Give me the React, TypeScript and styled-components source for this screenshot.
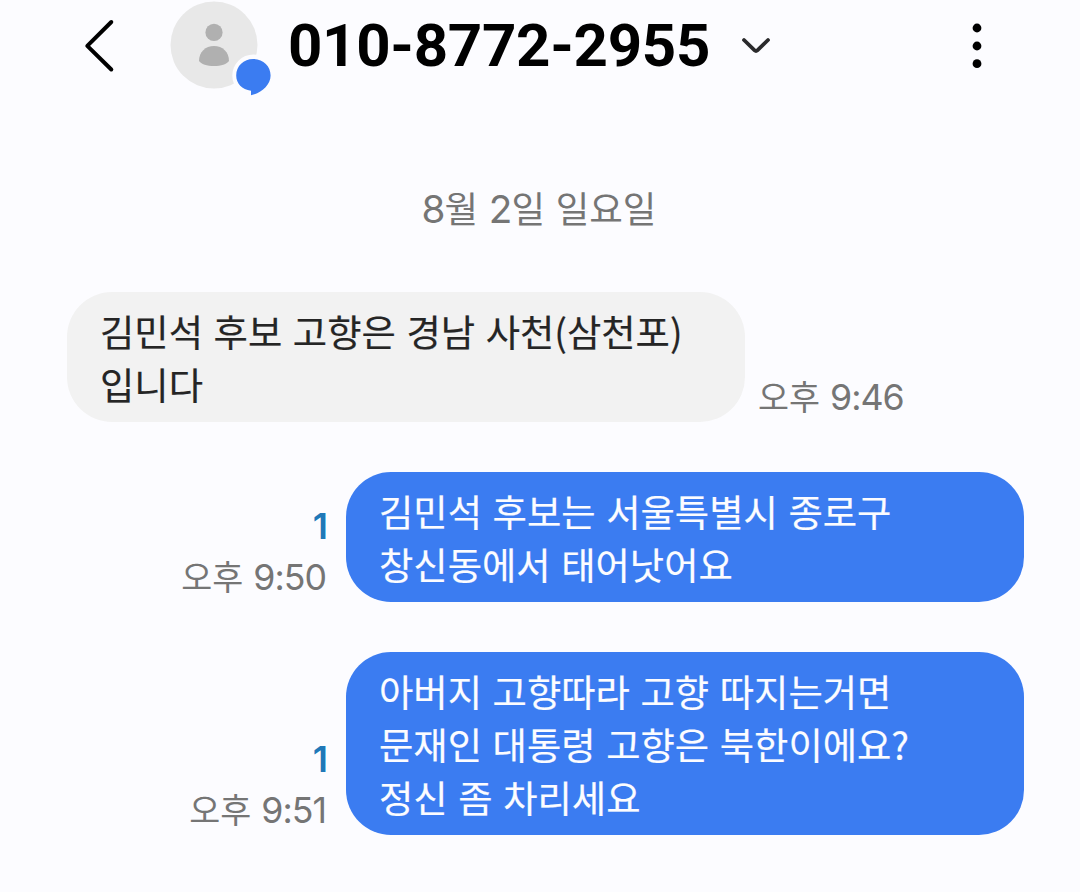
import React from "react";
import styled, { createGlobalStyle } from "styled-components";

type Message = {
  id: number;
  mine: boolean;
  lines: string[];
  time: string;
  unread?: number;
};

const messages: Message[] = [
  {
    id: 1,
    mine: false,
    lines: ["김민석 후보 고향은 경남 사천(삼천포)", "입니다"],
    time: "9:46",
  },
  {
    id: 2,
    mine: true,
    lines: ["김민석 후보는 서울특별시 종로구", "창신동에서 태어낫어요"],
    time: "9:50",
    unread: 1,
  },
  {
    id: 3,
    mine: true,
    lines: [
      "아버지 고향따라 고향 따지는거면",
      "문재인 대통령 고향은 북한이에요?",
      "정신 좀 차리세요",
    ],
    time: "9:51",
    unread: 1,
  },
];

const ContactAvatar = () => (
  <Avatar viewBox="0 0 104 100">
    <circle cx="44" cy="45" r="43.5" fill="#e8e8e8" />
    <circle cx="44" cy="32.4" r="8.6" fill="#b0b0b0" />
    <path
      d="M29 61C29 52 35.5 46 44 46S59 52 59 61C57 64 51 66 44 66S31 64 29 61Z"
      fill="#b0b0b0"
    />
    <circle cx="83.3" cy="75.5" r="21" fill="#fcfcff" />
    <path
      d="M83.3 59C93 59 100.6 66 100.6 75.5C100.6 85 91 93.5 81 95.2V90.8C72 89.5 66.2 83.5 66.2 75.5C66.2 66 73.7 59 83.3 59Z"
      fill="#3b7cf1"
    />
  </Avatar>
);

const MessageRow = ({ message }: { message: Message }) => (
  <Row $mine={message.mine}>
    <Bubble $mine={message.mine}>
      {message.lines.map((line) => (
        <Line key={line}>{line}</Line>
      ))}
    </Bubble>
    <Meta $mine={message.mine}>
      {message.unread ? <Unread>{message.unread}</Unread> : null}
      <Time>
        오후 <Digits>{message.time}</Digits>
      </Time>
    </Meta>
  </Row>
);

const App = () => (
  <>
    <GlobalStyle />
    <Screen>
      <Header>
        <BackIcon viewBox="0 0 32 56">
          <path d="M27.3 4L3.3 27.8L27.3 51.5" />
        </BackIcon>
        <ContactAvatar />
        <PhoneNumber>010-8772-2955</PhoneNumber>
        <ChevronIcon viewBox="0 0 32 20">
          <path d="M4 4L14.6 14.4Q16 15.6 17.4 14.4L28 4" />
        </ChevronIcon>
        <MoreIcon viewBox="0 0 12 48">
          <circle cx="6" cy="6" r="4.4" />
          <circle cx="6" cy="24" r="4.4" />
          <circle cx="6" cy="41.7" r="4.4" />
        </MoreIcon>
      </Header>
      <DateLabel>
        <Digits>8</Digits>월 <Digits>2</Digits>일 일요일
      </DateLabel>
      <MessageList>
        {messages.map((message) => (
          <MessageRow key={message.id} message={message} />
        ))}
      </MessageList>
    </Screen>
  </>
);

export default App;

const GlobalStyle = createGlobalStyle`
  * {
    box-sizing: border-box;
  }

  body {
    margin: 0;
    background: #fcfcff;
    font-family: "Noto Sans CJK KR", sans-serif;
  }
`;

const Screen = styled.div`
  width: 1080px;
  height: 892px;
  overflow: hidden;
  background: #fcfcff;
`;

const Header = styled.header`
  display: flex;
  align-items: center;
  height: 100px;
  padding: 0 97px 0 84px;

  svg {
    flex: none;
  }
`;

const BackIcon = styled.svg`
  width: 32px;
  height: 56px;
  margin-bottom: 8px;
  fill: none;
  stroke: #000;
  stroke-width: 4;
  stroke-linecap: round;
  stroke-linejoin: round;
`;

const Avatar = styled.svg`
  width: 104px;
  height: 100px;
  margin-left: 54px;
`;

const PhoneNumber = styled.h1`
  width: 423px;
  margin: 0 0 9px 14px;
  font-family: Roboto, sans-serif;
  font-size: 60px;
  font-weight: 700;
  line-height: 80px;
  letter-spacing: -0.3px;
  white-space: nowrap;
  color: #000;
`;

const ChevronIcon = styled.svg`
  width: 32px;
  height: 20px;
  margin: 0 0 9px 29px;
  fill: none;
  stroke: #2a2a2c;
  stroke-width: 3.8;
  stroke-linecap: round;
`;

const MoreIcon = styled.svg`
  width: 12px;
  height: 48px;
  margin: 0 0 8px auto;
  fill: #000;
`;

const Digits = styled.span`
  font-family: Inter, sans-serif;
  font-size: 1.06em;
  letter-spacing: -1px;
  line-height: 1;
`;

const DateLabel = styled.div`
  margin-top: 83px;
  height: 51px;
  padding-right: 2px;
  text-align: center;
  font-size: 36.5px;
  line-height: 50px;
  word-spacing: 2.5px;
  color: #757575;
`;

const MessageList = styled.div`
  display: flex;
  flex-direction: column;
  gap: 50px;
  padding: 58px 56px 0 67px;
`;

const Row = styled.div<{ $mine: boolean }>`
  display: flex;
  flex-direction: ${(props) => (props.$mine ? "row-reverse" : "row")};
  align-items: flex-end;
`;

const Bubble = styled.div<{ $mine: boolean }>`
  width: 678px;
  padding: 12.5px 33px 11.5px;
  border-radius: 45px;
  background: ${(props) => (props.$mine ? "#3b7cf1" : "#f2f2f2")};
  color: ${(props) => (props.$mine ? "#fcfcff" : "#252525")};
`;

const Line = styled.div`
  font-size: 37.3px;
  line-height: 53px;
  word-spacing: 2.3px;
  white-space: nowrap;
  -webkit-text-stroke: 0.2px currentColor;
`;

const Meta = styled.div<{ $mine: boolean }>`
  display: flex;
  flex-direction: column;
  align-items: flex-end;
  margin: ${(props) => (props.$mine ? "0 20px 0 0" : "0 0 0 13px")};
`;

const Unread = styled.span`
  margin-right: -2px;
  font-family: Inter, sans-serif;
  font-size: 36px;
  font-weight: 600;
  line-height: 50px;
  color: #2078b8;
`;

const Time = styled.span`
  height: 51px;
  font-size: 33.7px;
  line-height: 50px;
  word-spacing: 2.5px;
  white-space: nowrap;
  color: #757575;
`;
